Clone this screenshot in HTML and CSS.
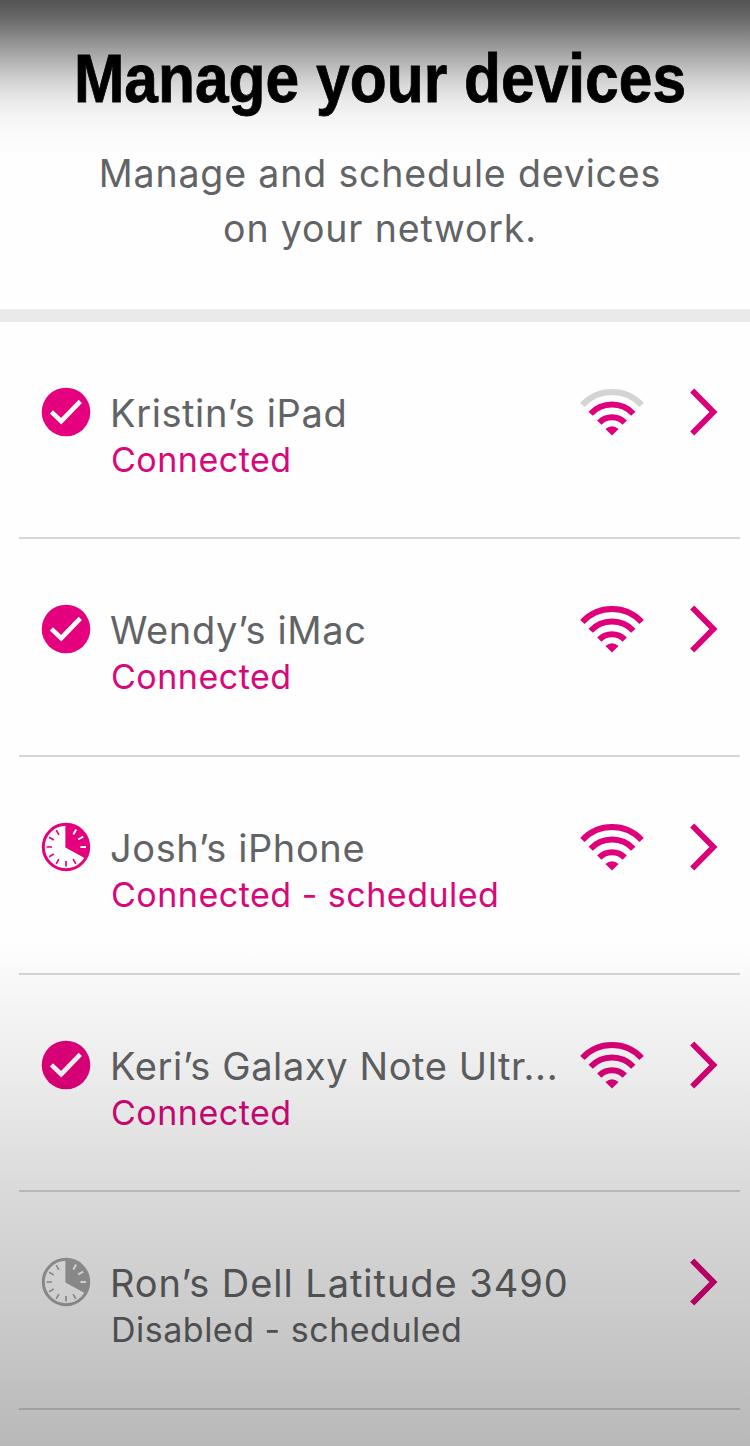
FILE: index.html
```html
<!DOCTYPE html>
<html lang="en">
  <head>
    <meta charset="UTF-8" />
    <title>Manage your devices</title>
    <link rel="stylesheet" href="styles.css">
  </head>
  <body>
    <!-- shared icons -->
    <svg class="sprite" width="0" height="0">
      <symbol id="check" viewBox="0 0 50 50">
        <circle cx="25" cy="25" r="24.3" fill="currentColor" />
        <path d="M10.4 24.9 L20.2 34.2 L39.3 14.3" fill="none" stroke="#fff" stroke-width="4.6" />
      </symbol>
      <symbol id="clock" viewBox="0 0 50 50">
        <circle class="face" cx="25" cy="25" r="22.7" stroke="currentColor" stroke-width="3" />
        <path d="M24.4 25.4 V2 A23 23 0 0 1 44.9 36.8 Z" fill="currentColor" />
        <path d="M25 44.5v-5.5M15.2 41.9l2.7-4.7M8.1 34.8l4.7-2.7M5.5 25h5.5M8.1 15.2l4.7 2.7M15.2 8.1l2.7 4.7M34.8 41.9l-2.7-4.7" fill="none" stroke="currentColor" stroke-width="1.7" />
        <path class="tick-light" d="M35.2 7.6l-2.9 5M42.2 14.6l-5 2.9M45 25h-5.6" fill="none" stroke-width="2" />
      </symbol>
      <symbol id="wifi" viewBox="0 0 64 48">
        <path class="bar-outer" d="M2.4 17 A40.3 40.3 0 0 1 61.6 17" fill="none" stroke-width="6" />
        <path d="M10.7 25.8 A29.3 29.3 0 0 1 53.3 25.8 M19.3 34.6 A17.6 17.6 0 0 1 44.7 34.6" fill="none" stroke="currentColor" stroke-width="6" />
        <path d="M25.4 41 Q32 35.4 38.6 41 L32 47.4 Z" fill="currentColor" stroke="none" />
      </symbol>
      <symbol id="arrow" viewBox="0 0 30 48">
        <path d="M3.2 2.5 L24.4 24 L3.2 45.5" fill="none" stroke="currentColor" stroke-width="5.8" />
      </symbol>
    </svg>

    <div class="container">
      <div class="header">
        <h1>Manage your devices</h1>
        <p>Manage and schedule devices<br />on your network.</p>
      </div>

      <ul class="devices">
        <li class="device">
          <svg class="status"><use href="#check" /></svg>
          <div class="info">
            <h2>Kristin’s iPad</h2>
            <p>Connected</p>
          </div>
          <svg class="wifi weak"><use href="#wifi" /></svg>
          <svg class="arrow"><use href="#arrow" /></svg>
        </li>
        <li class="device">
          <svg class="status"><use href="#check" /></svg>
          <div class="info">
            <h2>Wendy’s iMac</h2>
            <p>Connected</p>
          </div>
          <svg class="wifi"><use href="#wifi" /></svg>
          <svg class="arrow"><use href="#arrow" /></svg>
        </li>
        <li class="device">
          <svg class="status"><use href="#clock" /></svg>
          <div class="info">
            <h2>Josh’s iPhone</h2>
            <p>Connected - scheduled</p>
          </div>
          <svg class="wifi"><use href="#wifi" /></svg>
          <svg class="arrow"><use href="#arrow" /></svg>
        </li>
        <li class="device">
          <svg class="status"><use href="#check" /></svg>
          <div class="info">
            <h2>Keri’s Galaxy Note Ultr...</h2>
            <p>Connected</p>
          </div>
          <svg class="wifi"><use href="#wifi" /></svg>
          <svg class="arrow"><use href="#arrow" /></svg>
        </li>
        <li class="device disabled">
          <svg class="status"><use href="#clock" /></svg>
          <div class="info">
            <h2>Ron’s Dell Latitude 3490</h2>
            <p>Disabled - scheduled</p>
          </div>
          <svg class="arrow"><use href="#arrow" /></svg>
        </li>
      </ul>
      <div class="shade"></div>
    </div>
  </body>
</html>
```

FILE: styles.css
```css
* {
  box-sizing: border-box;
  margin: 0;
  padding: 0;
}

body {
  font-family: Inter, sans-serif;
  background-color: #fefefe;
  color: #626365;
}

.sprite {
  display: block;
}

.container {
  position: relative;
  height: 1446px;
  overflow: hidden;
}

.header {
  height: 321.6px;
  padding-top: 40px;
  padding-left: 10px;
  text-align: center;
  border-bottom: 13px solid #eaeaea;
  background: linear-gradient(#545454 0, #646464 15px, #7c7c7c 30px, #a0a0a0 50px, #b9b9b9 65px, #d2d2d2 80px, #e9e9e9 100px, #f5f5f5 118px, #fafafa 133px, #fefefe 158px);
}

h1 {
  font-family: "Liberation Sans", Arial, sans-serif;
  font-size: 68px;
  font-weight: bold;
  line-height: 76px;
  color: #000;
  white-space: nowrap;
  transform: scaleX(0.89);
  -webkit-text-stroke: 0.8px #000;
}

.header p {
  margin-top: 30px;
  font-size: 37.5px;
  line-height: 55px;
  letter-spacing: 0.85px;
}

.devices {
  list-style: none;
  padding: 0 10px 0 19px;
}

.device {
  display: flex;
  align-items: flex-start;
  height: 217.7px;
  padding: 65px 21px 0 22px;
  border-bottom: 2px solid #d6d6d6;
}

.status {
  width: 50px;
  height: 50px;
  color: #e5007d;
}

.face {
  fill: #fff;
}

.tick-light {
  stroke: #fff;
}

.info {
  flex: 1;
  padding-left: 19px;
  white-space: nowrap;
}

.info h2 {
  font-size: 38px;
  font-weight: 400;
  line-height: 52px;
  letter-spacing: 0.6px;
}

.info p {
  padding-left: 1px;
  font-size: 34px;
  line-height: 42px;
  letter-spacing: 0.5px;
  color: #d9087a;
}

.wifi {
  width: 64px;
  height: 48px;
  margin: 1px 45px 0 0;
  color: #e0007a;
  stroke: #e0007a;
}

.weak {
  stroke: #d4d4d4;
}

.arrow {
  width: 30px;
  height: 48px;
  margin-top: 1px;
  color: #dc0078;
}

.disabled .status {
  color: #a6a6a6;
}

.disabled .info h2 {
  letter-spacing: 0.95px;
}

.disabled .info p {
  color: #626365;
}

/* bottom fade over the list */
.shade {
  position: absolute;
  left: 0;
  right: 0;
  bottom: 0;
  height: 506px;
  background: linear-gradient(rgba(0, 0, 0, 0), rgba(0, 0, 0, 0.035) 60px, rgba(0, 0, 0, 0.075) 140px, rgba(0, 0, 0, 0.15) 260px, rgba(0, 0, 0, 0.2) 370px, rgba(0, 0, 0, 0.275) 506px);
  pointer-events: none;
}
```
